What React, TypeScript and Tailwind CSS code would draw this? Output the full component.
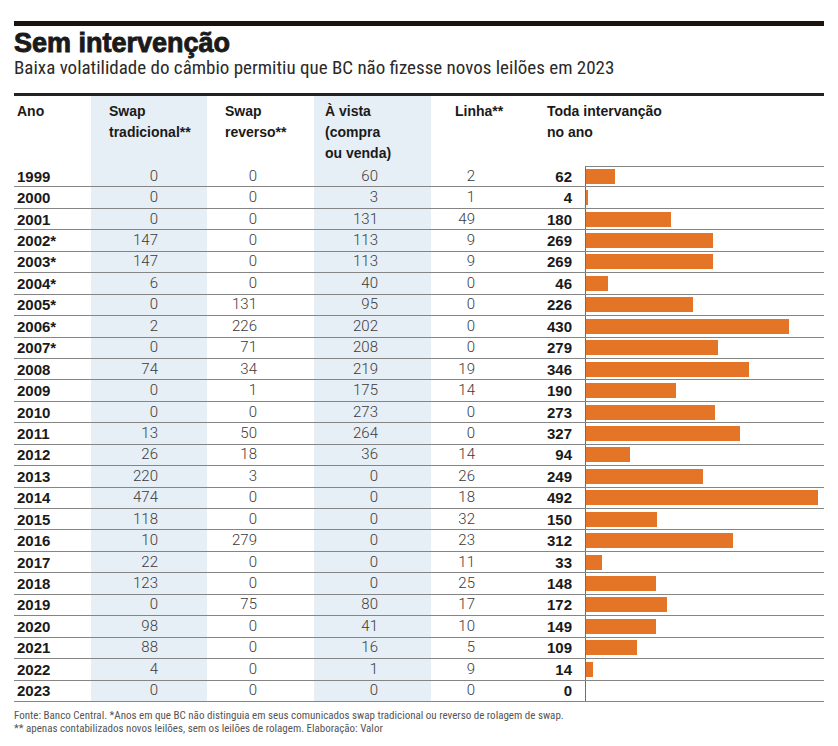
const rows: [string, number, number, number, number, number][] = [
  ['1999', 0, 0, 60, 2, 62],
  ['2000', 0, 0, 3, 1, 4],
  ['2001', 0, 0, 131, 49, 180],
  ['2002*', 147, 0, 113, 9, 269],
  ['2003*', 147, 0, 113, 9, 269],
  ['2004*', 6, 0, 40, 0, 46],
  ['2005*', 0, 131, 95, 0, 226],
  ['2006*', 2, 226, 202, 0, 430],
  ['2007*', 0, 71, 208, 0, 279],
  ['2008', 74, 34, 219, 19, 346],
  ['2009', 0, 1, 175, 14, 190],
  ['2010', 0, 0, 273, 0, 273],
  ['2011', 13, 50, 264, 0, 327],
  ['2012', 26, 18, 36, 14, 94],
  ['2013', 220, 3, 0, 26, 249],
  ['2014', 474, 0, 0, 18, 492],
  ['2015', 118, 0, 0, 32, 150],
  ['2016', 10, 279, 0, 23, 312],
  ['2017', 22, 0, 0, 11, 33],
  ['2018', 123, 0, 0, 25, 148],
  ['2019', 0, 75, 80, 17, 172],
  ['2020', 98, 0, 41, 10, 149],
  ['2021', 88, 0, 16, 5, 109],
  ['2022', 4, 0, 1, 9, 14],
  ['2023', 0, 0, 0, 0, 0],
];

// 492 -> 232px
const scale = 232 / 492;

const cols = 'grid grid-cols-[77px_116px_107px_117px_69px_85px_239px]';
const shade = 'bg-[#e6eef6]';
const num = "text-right font-['Roboto','Liberation_Sans',sans-serif] font-light text-[15px] text-[#3a3a3a]";

export default function App() {
  return (
    <div className="w-[838px] h-[746px] bg-white pt-[21px] px-[14px] text-[#1a1a1a] font-['Liberation_Sans',Arial,sans-serif]">
      <div className="h-[5px] bg-[#1b130c]" />
      <h1 className="mt-[3px] text-[27px] leading-[28px] font-bold [-webkit-text-stroke:0.9px_#1a1a1a]">
        Sem intervenção
      </h1>
      <p className="text-[19px] leading-[22px] text-[#2a2a2a] font-['Liberation_Sans_Narrow','Roboto_Condensed','Liberation_Sans',sans-serif]">
        Baixa volatilidade do câmbio permitiu que BC não fizesse novos leilões em 2023
      </p>
      <div className="mt-[14px] h-[3px] bg-[#222]" />

      {/* cabeçalho */}
      <div className={`${cols} h-[70px] text-[14px] leading-[21px] font-bold`}>
        <div className="pl-[3px] pt-[5px]">Ano</div>
        <div className={`${shade} pl-[18px] pt-[5px]`}>
          Swap
          <br />
          tradicional**
        </div>
        <div className="pl-[18px] pt-[5px]">
          Swap
          <br />
          reverso**
        </div>
        <div className={`${shade} pl-[11px] pt-[5px]`}>
          À vista
          <br />
          (compra
          <br />
          ou venda)
        </div>
        <div className="pl-[24px] pt-[5px]">Linha**</div>
        <div className="col-span-2 pl-[47px] pt-[5px]">
          Toda intervanção
          <br />
          no ano
        </div>
      </div>

      {/* linhas */}
      <div className="flex flex-col h-[536px]">
        {rows.map(([ano, st, sr, av, li, tot], i) => (
          <div key={ano} className={`${cols} h-[21.44px] min-h-0 shrink-0 leading-[17px] border-b border-[#858585]`}>
            <div className="pl-[3px] flex items-center text-[15px] font-bold">{ano}</div>
            <div className={`${shade} ${num} pr-[49px] flex items-center justify-end`}>{st}</div>
            <div className={`${num} pr-[57px] flex items-center justify-end`}>{sr}</div>
            <div className={`${shade} ${num} pr-[53px] flex items-center justify-end`}>{av}</div>
            <div className={`${num} pr-[25px] flex items-center justify-end`}>{li}</div>
            <div className="pr-[13px] flex items-center justify-end text-[15px] font-bold">{tot}</div>
            <div
              className={`border-l border-[#6f6f6f] flex items-center ${i === 0 ? 'border-t border-t-[#858585]' : ''}`}
            >
              <div className="h-[15px] bg-[#e47426]" style={{ width: tot * scale }} />
            </div>
          </div>
        ))}
      </div>

      <div className="mt-[7px] text-[11px] leading-[13px] text-[#555] font-['Liberation_Sans_Narrow','Roboto_Condensed','Liberation_Sans',sans-serif]">
        <p>
          Fonte: Banco Central. *Anos em que BC não distinguia em seus comunicados swap tradicional ou reverso de rolagem de swap.
        </p>
        <p>** apenas contabilizados novos leilões, sem os leilões de rolagem. Elaboração: Valor</p>
      </div>
    </div>
  );
}
